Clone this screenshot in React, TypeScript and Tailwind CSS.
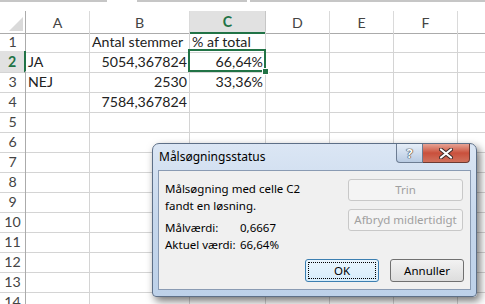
import React from 'react';

const cols = 'grid w-[530px] grid-cols-[26px_64px_100px_76px_64px_64px_64px_72px]';
const letters = ['A', 'B', 'C', 'D', 'E', 'F', 'G'];

type Row = { n: number; cells: { text: string; right?: boolean }[] };

const data: Row[] = [
  { n: 1, cells: [{ text: '' }, { text: 'Antal stemmer' }, { text: '% af total' }] },
  { n: 2, cells: [{ text: 'JA' }, { text: '5054,367824', right: true }, { text: '66,64%', right: true }] },
  { n: 3, cells: [{ text: 'NEJ' }, { text: '2530', right: true }, { text: '33,36%', right: true }] },
  { n: 4, cells: [{ text: '' }, { text: '7584,367824', right: true }, { text: '' }] },
];

function Sheet() {
  const rows: Row[] = [];
  for (let i = 1; i <= 14; i++) {
    rows.push(data.find((r) => r.n === i) ?? { n: i, cells: [] });
  }

  return (
    <div className="font-['Lato',sans-serif] text-[14.2px] text-[#222]">
      {/* formula bar edges */}
      <div className="flex h-[2px]">
        <div className="w-[107px] bg-[#c6c6c6]" />
        <div className="ml-[30px] w-[110px] bg-[#c6c6c6]" />
        <div className="ml-[3px] flex-1 bg-[#c6c6c6]" />
      </div>
      <div className="h-[9px]" />

      {/* column headers */}
      <div className={`${cols} h-[20px]`}>
        <div className="relative border-r border-b border-[#ababab]">
          <svg className="absolute right-[2px] bottom-[2px]" width="14" height="14" viewBox="0 0 14 14">
            <polygon points="14,0 14,14 0,14" fill="#dadada" />
          </svg>
        </div>
        {letters.map((l) =>
          l === 'C' ? (
            <div
              key={l}
              className="flex items-center justify-center border-r border-r-[#c6c6c6] border-b-2 border-b-[#217346] bg-[#e1e1e1] font-bold text-[#217346]"
            >
              {l}
            </div>
          ) : (
            <div
              key={l}
              className="flex items-center justify-center border-r border-r-[#dadada] border-b border-b-[#ababab] text-[#444]"
            >
              {l}
            </div>
          )
        )}
      </div>

      {rows.map((r) => (
        <div key={r.n} className={`${cols} h-[20px]`}>
          {r.n === 2 ? (
            <div className="flex items-center justify-center border-r-2 border-r-[#217346] border-b border-b-[#d4d4d4] bg-[#e1e1e1] font-bold text-[#217346]">
              {r.n}
            </div>
          ) : (
            <div className="flex items-center justify-center border-r border-r-[#ababab] border-b border-b-[#d4d4d4] text-[#444]">
              {r.n}
            </div>
          )}
          {letters.map((l, i) => {
            const c = r.cells[i];
            return (
              <div
                key={l}
                className={`flex items-center overflow-visible whitespace-nowrap border-r border-b border-[#d4d4d4] px-[2px] ${
                  c?.right ? 'justify-end' : 'justify-start'
                }`}
              >
                {c?.text}
              </div>
            );
          })}
        </div>
      ))}
    </div>
  );
}

function Dialog() {
  return (
    <div className="absolute left-[152px] top-[143px] h-[154px] w-[325px] rounded-t-[7px] rounded-b-[4px] border border-[#5d6f87] bg-gradient-to-b from-[#dbe6f4] via-[#c6d7ec] to-[#bdd1e9] shadow-[3px_4px_8px_rgba(0,0,0,0.55)] font-['Noto_Sans',sans-serif] text-[11.5px] text-black">
      {/* title bar */}
      <div className="flex h-[26px] items-start">
        <div className="pl-[6px] pt-[7px] text-[12px] leading-none">Målsøgningsstatus</div>
        <div className="ml-auto mr-[6px] flex">
          <div className="flex h-[19px] w-[27px] items-center justify-center rounded-bl-[4px] border border-t-0 border-[#6c7c92] bg-gradient-to-b from-[#e6eef8] to-[#b9cbe2] text-[13px] font-bold leading-none text-white [text-shadow:0_0_1px_#333,0_0_1px_#333,0_0_1px_#333]">
            ?
          </div>
          <div className="flex h-[19px] w-[47px] items-center justify-center rounded-br-[4px] border border-t-0 border-l-0 border-[#6c3a33] bg-gradient-to-b from-[#e6a294] via-[#c9503c] to-[#d0705c]">
            <svg width="14" height="11" viewBox="0 0 14 11">
              <path d="M2 1.5 L12 9.5 M12 1.5 L2 9.5" stroke="#3a2a28" strokeWidth="4" strokeLinecap="round" />
              <path d="M2 1.5 L12 9.5 M12 1.5 L2 9.5" stroke="#fff" strokeWidth="2.2" strokeLinecap="round" />
            </svg>
          </div>
        </div>
      </div>

      {/* client area */}
      <div className="mx-[5px] flex h-[120px] border border-[#8a9bb3] bg-[#f0f0f0]">
        <div className="flex flex-1 flex-col pl-[6px] pt-[9px]">
          <div className="leading-[17px]">Målsøgning med celle C2</div>
          <div className="leading-[17px]">fandt en løsning.</div>
          <div className="mt-[5px] grid grid-cols-[75px_1fr] leading-[17px]">
            <span>Målværdi:</span>
            <span>0,6667</span>
            <span>Aktuel værdi:</span>
            <span>66,64%</span>
          </div>
        </div>
        <div className="flex w-[126px] flex-col items-end pr-[7px] pt-[8px]">
          <div className="flex h-[22px] w-[115px] items-center justify-center rounded-[3px] border border-[#c8c8c8] bg-[#f4f4f4] text-[#a0a0a0]">
            Trin
          </div>
          <div className="mt-[8px] flex h-[22px] w-[115px] items-center justify-center rounded-[3px] border border-[#c8c8c8] bg-[#f4f4f4] text-[#a0a0a0]">
            Afbryd midlertidigt
          </div>
        </div>
      </div>

      {/* bottom buttons over the client area */}
      <div className="absolute left-[152px] top-[115px] flex gap-[11px]">
        <div className="flex h-[23px] w-[74px] items-center justify-center rounded-[3px] border border-[#3c7fb1] bg-gradient-to-b from-[#eaf6fd] to-[#d6ecfa] p-[2px]">
          <div className="flex h-full w-full items-center justify-center border border-dotted border-black">
            OK
          </div>
        </div>
        <div className="flex h-[23px] w-[74px] items-center justify-center rounded-[3px] border border-[#707070] bg-gradient-to-b from-[#f2f2f2] to-[#dddddd]">
          Annuller
        </div>
      </div>
    </div>
  );
}

export default function App() {
  return (
    <div className="relative h-[304px] w-[485px] overflow-hidden bg-white">
      <Sheet />
      {/* active cell C2 */}
      <div className="absolute left-[188px] top-[49px] h-[23px] w-[78px] border-2 border-[#217346]" />
      <div className="absolute left-[262px] top-[68px] h-[7px] w-[7px] border border-white bg-[#217346]" />
      <Dialog />
    </div>
  );
}
